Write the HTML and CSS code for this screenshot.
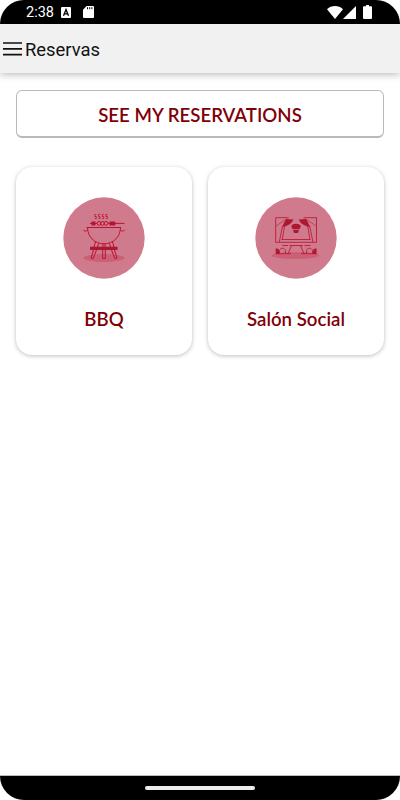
FILE: index.html
```html
<!DOCTYPE html>
<html lang="es">
<head>
  <meta charset="UTF-8">
  <meta name="viewport" content="width=device-width, initial-scale=1.0">
  <title>Reservas</title>
  <link rel="stylesheet" href="styles.css">
</head>
<body>
  <div class="phone">
    <div class="status-bar">
      <span class="clock">2:38</span>
      <svg class="icon-a" width="10" height="11" viewBox="0 0 10 11">
        <rect width="10" height="11" rx="1" fill="#fff"/>
        <path d="M2.5 8.7 5 2.5l2.5 6.2M3.4 6.8h3.2" fill="none" stroke="#000" stroke-width="1.3"/>
      </svg>
      <svg class="icon-sd" width="11" height="12" viewBox="0 0 11 12">
        <path d="M3.6 0H10a1 1 0 0 1 1 1v10a1 1 0 0 1-1 1H1a1 1 0 0 1-1-1V3.8z" fill="#fff"/>
        <path d="M4.5 1.2v2M6.7 1.2v2M8.9 1.2v2" stroke="#000"/>
      </svg>
      <div class="status-right">
        <svg width="16" height="13" viewBox="0 0 16 13">
          <path d="M0 3.2C4.5-1 11.5-1 16 3.2L8 13z" fill="#fff"/>
        </svg>
        <svg width="13" height="13" viewBox="0 0 13 13">
          <path d="M13 0v13H0z" fill="#fff"/>
        </svg>
        <svg class="icon-battery" width="9" height="14" viewBox="0 0 9 14">
          <path d="M3 0h3v1.3h2a1 1 0 0 1 1 1V13a1 1 0 0 1-1 1H1a1 1 0 0 1-1-1V2.3a1 1 0 0 1 1-1h2z" fill="#fff"/>
        </svg>
      </div>
    </div>

    <div class="app-header">
      <svg class="menu-icon" width="19" height="14" viewBox="0 0 19 14">
        <path d="M0 1h19M0 6.8h19M0 12.6h19" stroke="#111" stroke-width="1.7"/>
      </svg>
      <h1>Reservas</h1>
    </div>

    <div class="content">
      <button class="reservations-btn">SEE MY RESERVATIONS</button>

      <div class="cards">
        <div class="card">
          <svg class="card-icon" width="82" height="82" viewBox="0 0 82 82">
            <circle cx="41" cy="41" r="40.7" fill="#cf7b8d"/>
            <ellipse cx="41" cy="61" rx="20.5" ry="4" fill="#cb6075"/>
            <g fill="none" stroke="#bd1230" stroke-width="1">
              <path d="M33.3 17.5h-1.5v2h1.5v2h-1.5M37 17.5h-1.5v2h1.5v2h-1.5M40.7 17.5h-1.5v2h1.5v2h-1.5M44.4 17.5h-1.5v2h1.5v2h-1.5" stroke-width=".8"/>
              <path d="M27 26.4h7M45 26.4h16.5"/>
              <circle cx="36" cy="26.4" r="1.9"/>
              <circle cx="39.5" cy="26.4" r="1.9"/>
              <circle cx="43" cy="26.4" r="1.9"/>
              <path d="M23.5 30.5h34.5M24.5 30.5c0 9 7 16.3 16.5 16.3s16.5-7.3 16.5-16.3M20.3 32.8c1 1.700 3 1.700 4.200 0M57.500 32.800c1.200 1.700 3.200 1.700 4.200 0"/>
              <path d="M32.5 45l-1.5 5M49.5 45l1.5 5M35.5 46.5l-1 3.5M46.5 46.5l1 3.5M40 47v3M42 47v3"/>
              <path d="M30.5 53l-2.5 8 2 .7 3.5-8.7M51.5 53l2.5 8-2 .7-3.5-8.7M39.7 53v8.5h2.6V53"/>
            </g>
            <path d="M28.5 24.4h4v4h-4zM46.5 24.4h5.8v4h-5.8z" fill="#b21633"/>
            <rect x="27" y="49.7" width="27.5" height="3.3" fill="#a91a31"/>
          </svg>
          <span class="card-title">BBQ</span>
        </div>

        <div class="card">
          <svg class="card-icon" width="82" height="82" viewBox="0 0 82 82">
            <circle cx="41" cy="41" r="40.7" fill="#cf7b8d"/>
            <ellipse cx="40.5" cy="58.5" rx="24" ry="3.5" fill="#cb6075"/>
            <g fill="none" stroke="#bd1b37" stroke-width=".9">
              <path d="M33.5 20.7H20.7v24.6h40.8V20.7H48.5"/>
              <path d="M31.5 22l-10.500 7M50.700 22l10.500 7" stroke-width=".6"/>
              <path d="M27.500 29l-3.200 16M29.500 29l-2.200 13.500M54.700 29l3.200 16M52.700 29l2.200 13.500"/>
              <path d="M26.5 42.5h29"/>
              <path d="M27.500 48.500h5.500M34.500 48.500h13.500M49.500 48.500h6"/>
              <path d="M36.5 48.500l-3.500 8.300M45.500 48.500l3.500 8.300M21 56.700h15M46 56.700h15.500"/>
              <path d="M24.500 56.500v-3c1-3 5-3 6 0v3M51.500 56.500v-3c1-3 5-3 6 0v3"/>
            </g>
            <g fill="#ae1631">
              <path d="M31 22l7.500.5c-1.500 3.500-5 6.500-11.500 7.500zM51.200 22l-7.500.5c1.500 3.500 5 6.500 11.500 7.500z"/>
              <path d="M36.3 29c1.500-3 8-3 9.500 0l-1 3h-7.500zM38 32.700h6l-1 3.300h-4z"/>
              <path d="M20.700 51.200l3 .8.800 5h-3.800zM61.500 51.200l-3 .8-.8 5h3.800z"/>
            </g>
          </svg>
          <span class="card-title">Salón Social</span>
        </div>
      </div>
    </div>

    <div class="nav-bar">
      <div class="home-handle"></div>
    </div>
  </div>
</body>
</html>
```

FILE: styles.css
```css
:root {
  --title-color: #800006;
  --header-background: #f1f1f1;
}

* {
  margin: 0;
  padding: 0;
  box-sizing: border-box;
}

body {
  background: #fff;
  font-family: Roboto, sans-serif;
}

svg {
  display: block;
}

.phone {
  width: 400px;
  height: 800px;
  display: flex;
  flex-direction: column;
  background: #fff;
  border-radius: 24px;
  overflow: hidden;
}

.status-bar {
  height: 24px;
  flex-shrink: 0;
  display: flex;
  align-items: center;
  padding: 0 28px 0 26px;
  background: #000;
  color: #fff;
}

.clock {
  width: 35px;
  padding-top: 2px;
  font-size: 14.5px;
  line-height: 22px;
}

.icon-sd {
  margin-left: 12px;
}

.status-right {
  display: flex;
  align-items: center;
  margin-left: auto;
}

.icon-battery {
  margin-left: 7px;
}

.app-header {
  height: 49px;
  flex-shrink: 0;
  display: flex;
  align-items: center;
  gap: 3px;
  padding-left: 3px;
  background: var(--header-background);
  box-shadow: 0 1px 8px rgba(0, 0, 0, 0.3);
}

h1 {
  padding-top: 2px;
  font-size: 18.4px;
  font-weight: 400;
  color: #111;
  line-height: 24px;
}

.content {
  flex: 1;
  padding: 17px 16px 0;
}

.reservations-btn {
  display: block;
  width: 100%;
  height: 48px;
  padding-top: 2px;
  background: #fff;
  border: 1px solid #b9b9bd;
  border-bottom-width: 2px;
  border-radius: 6px;
  font-family: Lato, sans-serif;
  font-size: 18.65px;
  font-weight: 600;
  color: var(--title-color);
}

.cards {
  display: flex;
  gap: 16px;
  margin-top: 29px;
}

.card {
  flex: 1;
  height: 188px;
  display: flex;
  flex-direction: column;
  align-items: center;
  padding-top: 30px;
  background: #fff;
  border-radius: 16px;
  box-shadow: 0 1px 4px rgba(0, 0, 0, 0.26);
}

.card-title {
  margin-top: 28px;
  font-family: Lato, sans-serif;
  font-size: 18.65px;
  font-weight: 600;
  line-height: 24px;
  color: var(--title-color);
}

.nav-bar {
  height: 25px;
  flex-shrink: 0;
  display: flex;
  justify-content: center;
  padding-top: 10px;
  background: #000;
  border-top: 1px solid #b8bcbb;
}

.home-handle {
  width: 110px;
  height: 4px;
  border-radius: 2px;
  background: #eceeec;
}
```
